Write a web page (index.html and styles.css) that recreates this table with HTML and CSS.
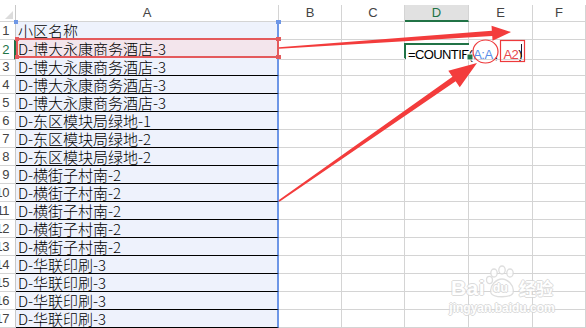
FILE: index.html
```html
<!DOCTYPE html>
<html lang="zh-CN">
<head>
<meta charset="utf-8">
<title>COUNTIF</title>
<link rel="stylesheet" href="styles.css">
</head>
<body>
<div class="sheet">
  <div class="row hdr">
    <div class="c corner"><svg class="tri" width="15" height="16" viewBox="0 0 15 16"><polygon points="13,6 13,14 5,14" fill="#dcdcdc"/></svg></div>
    <div class="c ch">A</div>
    <div class="c ch">B</div>
    <div class="c ch">C</div>
    <div class="c ch act">D</div>
    <div class="c ch">E</div>
    <div class="c ch">F</div>
  </div>
  <div class="row"><div class="c rh"><span>1</span></div><div class="c a top">小区名称</div><div class="c"></div><div class="c"></div><div class="c"></div><div class="c"></div><div class="c"></div></div>
  <div class="row"><div class="c rh cur"><span>2</span></div><div class="c a ref">D-博大永康商务酒店-3</div><div class="c"></div><div class="c"></div><div class="c d2"><span class="edit"><span class="ftxt">=COUNTIF(<span class="rb">A:A</span><span class="comma">,</span><span class="rr">A2</span>)</span></span></div><div class="c"></div><div class="c"></div></div>
  <div class="row"><div class="c rh"><span>3</span></div><div class="c a ln">D-博大永康商务酒店-3</div><div class="c"></div><div class="c"></div><div class="c"></div><div class="c"></div><div class="c"></div></div>
  <div class="row"><div class="c rh"><span>4</span></div><div class="c a ln">D-博大永康商务酒店-3</div><div class="c"></div><div class="c"></div><div class="c"></div><div class="c"></div><div class="c"></div></div>
  <div class="row"><div class="c rh"><span>5</span></div><div class="c a ln">D-博大永康商务酒店-3</div><div class="c"></div><div class="c"></div><div class="c"></div><div class="c"></div><div class="c"></div></div>
  <div class="row"><div class="c rh"><span>6</span></div><div class="c a ln">D-东区模块局绿地-1</div><div class="c"></div><div class="c"></div><div class="c"></div><div class="c"></div><div class="c"></div></div>
  <div class="row"><div class="c rh"><span>7</span></div><div class="c a ln">D-东区模块局绿地-2</div><div class="c"></div><div class="c"></div><div class="c"></div><div class="c"></div><div class="c"></div></div>
  <div class="row"><div class="c rh"><span>8</span></div><div class="c a ln">D-东区模块局绿地-2</div><div class="c"></div><div class="c"></div><div class="c"></div><div class="c"></div><div class="c"></div></div>
  <div class="row"><div class="c rh"><span>9</span></div><div class="c a ln">D-横街子村南-2</div><div class="c"></div><div class="c"></div><div class="c"></div><div class="c"></div><div class="c"></div></div>
  <div class="row"><div class="c rh"><span>10</span></div><div class="c a ln">D-横街子村南-2</div><div class="c"></div><div class="c"></div><div class="c"></div><div class="c"></div><div class="c"></div></div>
  <div class="row"><div class="c rh"><span>11</span></div><div class="c a ln">D-横街子村南-2</div><div class="c"></div><div class="c"></div><div class="c"></div><div class="c"></div><div class="c"></div></div>
  <div class="row"><div class="c rh"><span>12</span></div><div class="c a ln">D-横街子村南-2</div><div class="c"></div><div class="c"></div><div class="c"></div><div class="c"></div><div class="c"></div></div>
  <div class="row"><div class="c rh"><span>13</span></div><div class="c a ln">D-横街子村南-2</div><div class="c"></div><div class="c"></div><div class="c"></div><div class="c"></div><div class="c"></div></div>
  <div class="row"><div class="c rh"><span>14</span></div><div class="c a ln">D-华联印刷-3</div><div class="c"></div><div class="c"></div><div class="c"></div><div class="c"></div><div class="c"></div></div>
  <div class="row"><div class="c rh"><span>15</span></div><div class="c a ln">D-华联印刷-3</div><div class="c"></div><div class="c"></div><div class="c"></div><div class="c"></div><div class="c"></div></div>
  <div class="row"><div class="c rh"><span>16</span></div><div class="c a ln">D-华联印刷-3</div><div class="c"></div><div class="c"></div><div class="c"></div><div class="c"></div><div class="c"></div></div>
  <div class="row"><div class="c rh"><span>17</span></div><div class="c a ln">D-华联印刷-3</div><div class="c"></div><div class="c"></div><div class="c"></div><div class="c"></div><div class="c"></div></div>
</div>

<svg class="overlay" width="586" height="328" viewBox="0 0 586 328">
  <rect x="17" y="39" width="261" height="18" fill="none" stroke="#e45a5c" stroke-width="2"/>
  <rect x="14" y="20" width="4" height="4" fill="#6d96e6"/>
  <rect x="276" y="20" width="5" height="4" fill="#6d96e6"/>
  <rect x="15" y="37" width="4" height="4" fill="#e45a5c"/>
  <rect x="276" y="37" width="5" height="4" fill="#e45a5c"/>
  <rect x="15" y="55" width="4" height="4" fill="#e45a5c"/>
  <rect x="276" y="55" width="5" height="4" fill="#e45a5c"/>
  <rect x="467" y="54" width="6" height="6" fill="#217346" stroke="#fff" stroke-width="1"/>
  <rect x="521" y="44" width="1" height="13" fill="#1a1a2e"/>
  <ellipse cx="485.5" cy="51.5" rx="12.5" ry="11.5" fill="none" stroke="#ee3a3c" stroke-width="1.2"/>
  <rect x="500.5" y="40.5" width="24" height="21" fill="none" stroke="#ee3a3c" stroke-width="1.2"/>
  <polygon fill="#f33c3c" points="279.06,48.8 492.22,35.9 492.56,40.79 511,32 491.52,25.83 491.86,30.72 278.94,47.2"/>
  <polygon fill="#f33c3c" points="279.46,201.66 455.63,81.31 459.75,87.21 477,63 448.31,70.81 452.43,76.71 278.54,200.34"/>
</svg>

<div class="wm">
  <div class="wm-top">
    <span class="wm-bai">Bai</span>
    <span class="wm-paw">
      <svg class="paw" width="34" height="34" viewBox="0 0 34 34">
        <g fill="#fff" stroke="#d9d9d9" stroke-width="1.3">
          <ellipse cx="9" cy="8" rx="3.2" ry="4"/>
          <ellipse cx="17" cy="5" rx="3.2" ry="4"/>
          <ellipse cx="25" cy="8" rx="3.2" ry="4"/>
          <ellipse cx="4.5" cy="15" rx="3" ry="3.6"/>
          <path d="M6 28 C4 20 12 14 17 14 C22 14 30 20 28 28 C26 33 8 33 6 28 Z"/>
        </g>
      </svg>
      <span class="wm-du">du</span>
    </span>
    <span class="wm-jy">经验</span>
  </div>
  <div class="wm-url">jingyan.baidu.com</div>
</div>
</body>
</html>
```

FILE: styles.css
```css
* {
  box-sizing: border-box;
  margin: 0;
  padding: 0;
}

html,
body {
  width: 586px;
  height: 328px;
  overflow: hidden;
  background: #ffffff;
}

body {
  position: relative;
  font-family: "Liberation Sans", Arial, sans-serif;
  color: #000;
}

.sheet {
  padding-top: 5px;
}

.row {
  display: grid;
  grid-template-columns: 16px 263px 63px 63px 64px 64px 1fr;
  height: 18px;
}

.hdr {
  height: 17px;
}

.c {
  border-right: 1px solid #d4d4d4;
  border-bottom: 1px solid #d4d4d4;
  white-space: nowrap;
  min-width: 0;
}

.corner {
  border-right-color: #c8c8c8;
}

.tri {
  display: block;
}

.ch {
  text-align: center;
  font-size: 13px;
  line-height: 16px;
  color: #444;
}

.ch.act {
  background: #e1e1e1;
  color: #217346;
  border-bottom: 2px solid #217346;
  line-height: 15px;
}

.rh {
  display: flex;
  justify-content: flex-end;
  align-items: center;
  padding-right: 6px;
  overflow: hidden;
  font-size: 13px;
  letter-spacing: -0.5px;
  color: #444;
  border-right-color: #c8c8c8;
}

.rh.cur {
  color: #217346;
  border-right: 2px solid #217346;
  padding-right: 5px;
}

.a {
  background: #eef2fc;
  border-right: 2px solid #6d96e6;
  padding-left: 2px;
  font-family: "Noto Sans CJK SC", "Liberation Sans", sans-serif;
  font-weight: 300;
  font-size: 15px;
  line-height: 17px;
  color: #000;
}

.a.ln {
  border-bottom-color: #000;
}

.a.ref {
  background: #f3e5ec;
}

.d2 {
  overflow: visible;
}

.edit {
  display: block;
  width: 65px;
  height: 16px;
  margin-top: 3px;
  margin-left: -1px;
  border: 2px solid #217346;
  border-right: none;
  background: #fff;
  overflow: visible;
}

.ftxt {
  display: inline-block;
  background: #fff;
  padding-left: 2px;
  padding-right: 2px;
  font-family: "Liberation Sans", Arial, sans-serif;
  font-size: 13px;
  line-height: 11px;
  letter-spacing: -0.6px;
  color: #000;
}

.rb {
  color: #5a8ee8;
  margin-left: 1px;
}

.comma {
  margin-left: 2px;
  margin-right: 6px;
}

.rr {
  color: #e8474a;
}

.overlay {
  position: absolute;
  left: 0;
  top: 0;
  pointer-events: none;
}

.wm {
  position: absolute;
  left: 448px;
  top: 263px;
  width: 108px;
  display: flex;
  flex-direction: column;
  align-items: center;
  opacity: 0.85;
}

.wm-top {
  display: flex;
  align-items: flex-end;
  height: 36px;
}

.wm-bai,
.wm-du,
.wm-url {
  font-family: "Liberation Sans", Arial, sans-serif;
  font-weight: bold;
  color: #fff;
  text-shadow: 1px 0 0 #d6d6d6, -1px 0 0 #d6d6d6, 0 1px 0 #d6d6d6, 0 -1px 0 #d6d6d6;
}

.wm-bai {
  font-size: 21px;
  line-height: 22px;
  letter-spacing: 0.5px;
}

.wm-paw {
  position: relative;
  width: 34px;
  height: 34px;
}

.paw {
  display: block;
}

.wm-du {
  position: absolute;
  left: 8px;
  top: 17px;
  font-size: 12px;
  line-height: 12px;
}

.wm-jy {
  font-family: "Noto Sans CJK SC", sans-serif;
  font-weight: bold;
  font-size: 17px;
  line-height: 22px;
  color: #fff;
  text-shadow: 1px 0 0 #d6d6d6, -1px 0 0 #d6d6d6, 0 1px 0 #d6d6d6, 0 -1px 0 #d6d6d6;
}

.wm-url {
  font-size: 12px;
  line-height: 14px;
  margin-top: 2px;
}
```
